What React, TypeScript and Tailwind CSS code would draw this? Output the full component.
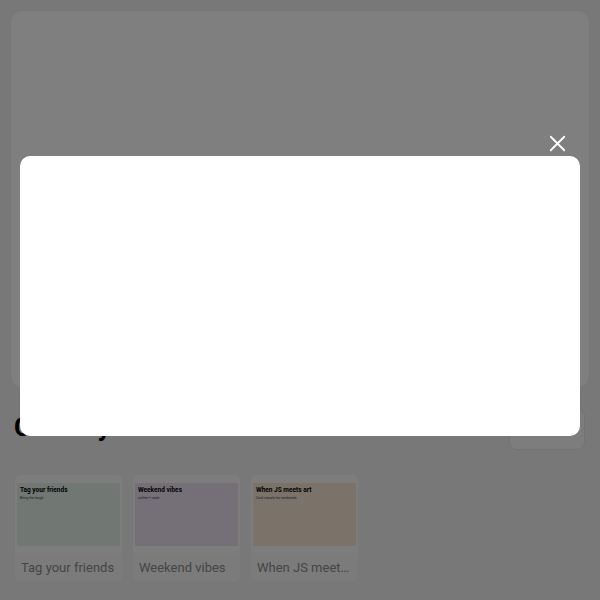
import { X } from 'lucide-react';

const TEMPLATES = [
  { title: 'Tag your friends', sub: 'Bring the laugh', bg: 'bg-[#e2efe7]' },
  { title: 'Weekend vibes', sub: 'coffee + code', bg: 'bg-[#ebe1ee]' },
  { title: 'When JS meets art', sub: 'Cool visuals for weekends', bg: 'bg-[#f7e5d5]' },
];

export default function App() {
  return (
    <div className="relative w-[600px] h-[600px] overflow-hidden bg-[#f1f1f1] font-['Roboto',sans-serif]">
      {/* Page behind the lightbox */}
      <div className="p-[10px]">
        <div className="h-[378px] rounded-xl bg-white border border-[#ececec]" />
      </div>

      <div className="flex items-start justify-between pl-[14px] pr-[15px] mt-[10px]">
        <h2 className="text-[26px] font-bold text-black leading-[32px] mt-[3px]">Create your own</h2>
        <button className="w-[76px] h-[42px] rounded-lg bg-[#fbfbfb] border border-[#e6e6e6] text-sm text-gray-700">
          See all
        </button>
      </div>

      <div className="flex gap-[11px] px-[15px] mt-[25px]">
        {TEMPLATES.map((t) => (
          <div key={t.title} className="w-[107px] rounded-md bg-[#f7f7f7] flex flex-col">
            <div className="p-[2px] pt-[8px] pb-[7px] bg-[#fafafa] rounded-t-md">
              <div className={`h-[63px] ${t.bg} px-[3px] pt-[3px]`}>
                <div className="text-[6.5px] font-bold text-black leading-[8px]">{t.title}</div>
                <div className="text-[3.5px] text-gray-700 mt-[2px]">{t.sub}</div>
              </div>
            </div>
            <div className="h-[29px] px-[6px] flex items-center text-[13px] text-[#8a8a8a]">
              <span className="truncate">{t.title}</span>
            </div>
          </div>
        ))}
      </div>

      {/* Lightbox overlay */}
      <div className="absolute inset-0 bg-[rgba(0,0,0,0.5)]">
        <div className="absolute left-[544px] top-[130px] text-white">
          <X size={27} strokeWidth={1.6} />
        </div>
        <div className="absolute left-[20px] top-[156px] w-[560px] h-[280px] rounded-[10px] bg-white" />
      </div>
    </div>
  );
}
